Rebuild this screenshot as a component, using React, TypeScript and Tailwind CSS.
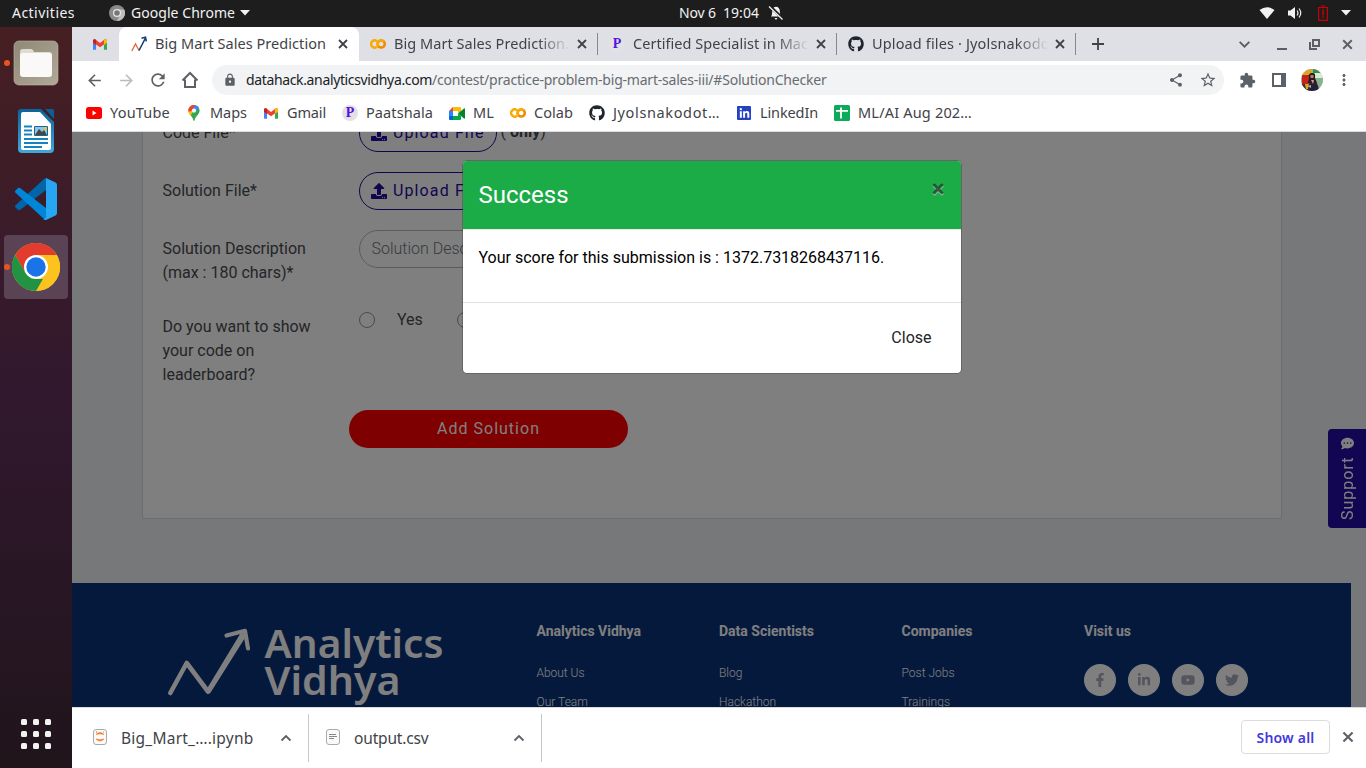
import React, { useLayoutEffect, useRef, useState, ReactNode } from "react";
import { FaGithub, FaFacebookF, FaLinkedinIn, FaYoutube, FaTwitter, FaUpload, FaCommentDots } from "react-icons/fa";
import { MdArrowBack, MdArrowForward, MdRefresh, MdLock, MdShare, MdStarBorder, MdExtension, MdMoreVert } from "react-icons/md";

/** Single line of text whose tracking is adjusted so that it fills a given width. */
function Label({ w, className = "", children }: { w: number; className?: string; children: ReactNode }) {
  const ref = useRef<HTMLSpanElement>(null);
  const [spacing, setSpacing] = useState(0);
  useLayoutEffect(() => {
    const el = ref.current;
    if (!el) return;
    const count = (el.textContent ?? "").length;
    setSpacing((w - el.getBoundingClientRect().width) / count);
  }, [w]);
  return (
    <span className={"block shrink-0 overflow-visible " + className} style={{ width: w }}>
      <span ref={ref} className="inline-block whitespace-pre" style={{ letterSpacing: spacing }}>{children}</span>
    </span>
  );
}

/** Line glyph drawn on a 14-unit grid, used for the small window and tab controls. */
const Glyph = ({ d, className }: { d: string; className: string }) => (
  <svg viewBox="0 0 14 14" className={"shrink-0 " + className} fill="none" stroke="currentColor" strokeWidth="1.800"><path d={d} /></svg>
);
const CROSS = "M3 3l8 8M11 3l-8 8";
const PLUS = "M7 1v12M1 7h12";
const DOWN = "M2.500 4.500 7 9l4.500-4.500";
const UP = "M2.500 9.500 7 5l4.500 4.500";

const GmailIcon = () => (
  <svg viewBox="0 0 16 12" className="h-[11px] w-[14px] shrink-0">
    <path d="M0 2v9a1 1 0 0 0 1 1h2.500V5z" fill="#4285f4" />
    <path d="M16 2v9a1 1 0 0 1-1 1h-2.500V5z" fill="#34a853" />
    <path d="M0 4V1.600C0 .1 1.700-.5 2.900.4L8 4.300 13.100.4C14.300-.5 16 .1 16 1.600L12.500 6 8 9.200 3.500 6z" fill="#ea4335" />
    <path d="M12.500.900 13.100.4C14.300-.5 16 .1 16 1.600V4l-3.500 2.600z" fill="#fbbc04" />
    <path d="M0 4V1.600C0 .1 1.700-.5 2.900.4l.6.5v5.700z" fill="#c5221f" />
  </svg>
);

const ColabIcon = () => (
  <svg viewBox="0 0 16 10" className="h-[10px] w-4 shrink-0" fill="none" strokeWidth="2.500">
    <path d="M7 2.200A3.600 3.600 0 1 0 7 7.800" stroke="#f9ab00" />
    <circle cx="11.200" cy="5" r="3.600" stroke="#f08c00" />
    <path d="M8.600 7.500A3.600 3.600 0 0 1 13.800 2.500" stroke="#f9ab00" />
  </svg>
);

const PIcon = () => (
  <span className="flex size-4 shrink-0 items-center justify-center rounded-full bg-[#e2e2e6] font-['Liberation_Serif',serif] text-[14px] font-bold leading-none text-[#5412e0]">P</span>
);

const ArrowIcon = () => (
  <svg viewBox="0 0 16 16" className="size-4 shrink-0" fill="none" strokeWidth="1.300">
    <path d="M.8 15 4.500 8 8 14.500" stroke="#f0643c" />
    <path d="M8 14.500 14.500 2M10.500 2.300l4-1 .8 4" stroke="#173f7c" strokeWidth="1.600" />
  </svg>
);

const YouTubeIcon = () => (
  <svg viewBox="0 0 16 12" className="h-3 w-4 shrink-0"><rect width="16" height="12" rx="2.500" fill="red" /><path d="M6.500 3.600v4.800L10.500 6z" fill="#fff" /></svg>
);

const MapsIcon = () => (
  <svg viewBox="0 0 12 16" className="h-4 w-3 shrink-0">
    <path d="M6 0a5.600 5.600 0 0 1 5.600 5.600C11.600 9.500 7.500 11 6.600 15.400q-.6.900-1.200 0C4.500 11 .4 9.500.4 5.600A5.600 5.600 0 0 1 6 0z" fill="#34a853" />
    <path d="M1 8.300A5.600 5.600 0 0 1 1.700 2L6 5.600 2.500 10.400z" fill="#fbbc04" />
    <path d="M1.700 2A5.600 5.600 0 0 1 7.700.3L4 6 .5 6.500Q0 4 1.700 2z" fill="#ea4335" />
    <path d="M7.700.3A5.600 5.600 0 0 1 11 3.100L6 7.500 4 5z" fill="#4285f4" />
    <circle cx="6" cy="5.600" r="2.100" fill="#fff" />
  </svg>
);

const MeetIcon = () => (
  <svg viewBox="0 0 16 13" className="h-[13px] w-4 shrink-0">
    <path d="M0 4 4 0v4z" fill="#ea4335" /><path d="M4 0h7a1 1 0 0 1 1 1v4L9 6V4H4z" fill="#fbbc04" />
    <path d="M0 4h4v5H0z" fill="#2684fc" /><path d="M0 9h4v4H1a1 1 0 0 1-1-1z" fill="#0066da" />
    <path d="M4 9h5V6.500l3 2.500v3a1 1 0 0 1-1 1H4z" fill="#00ac47" /><path d="M9 6.500 15 1.500q1-.5 1 .5v9q0 1-1 .5z" fill="#00832d" />
    <path d="M4 4h5v5H4z" fill="#fff" />
  </svg>
);

const LinkedInIcon = () => (
  <span className="flex size-[14px] shrink-0 items-center justify-center rounded-[1px] bg-[#2541c4] text-white"><FaLinkedinIn className="size-[11px]" /></span>
);

const SheetIcon = () => (
  <svg viewBox="0 0 16 16" className="size-4 shrink-0"><rect width="16" height="16" rx="1.500" fill="#0caa5b" /><path d="M2 5.800h12M7 2.500v11" stroke="#fff" strokeWidth="1.800" /></svg>
);

function TopBar() {
  return (
    <header className="flex h-[27px] shrink-0 items-center bg-[#1d1d1d] pb-px pl-3 text-[14px] leading-[26px] text-[#f2f2f2]">
      <Label w={63}>Activities</Label>
      <svg viewBox="0 0 16 16" className="ml-[34px] mr-[6px] size-4 shrink-0">
        <circle cx="8" cy="8" r="8" fill="#8a8a8a" /><path d="M8 4.500h7.200A8 8 0 0 1 8 16l3-6z" fill="#bdbdbd" />
        <circle cx="8" cy="8" r="4" fill="#e8e8e8" /><circle cx="8" cy="8" r="2.800" fill="#777" />
      </svg>
      <Label w={104}>Google Chrome</Label>
      <svg viewBox="0 0 10 6" className="ml-[5px] h-[6px] w-[10px]"><path d="M0 0h10L5 5.500z" fill="#f2f2f2" /></svg>
      <Label w={37} className="ml-[429px]">Nov 6</Label>
      <Label w={36} className="ml-[7px]">19:04</Label>
      <svg viewBox="0 0 16 16" className="ml-[9px] size-4 shrink-0">
        <path d="M3 11.500C4.500 10 4 7 4.300 5.200 4.700 3 6 2 8 1.800c2.400.1 3.600 1.800 3.800 4 .2 2.500 0 4 1.700 5.700zM6.500 13h3l-1.500 2z" fill="#f2f2f2" />
        <path d="m1.500.8 13.500 13" stroke="#1d1d1d" strokeWidth="3" /><path d="m1 1.500 13.500 13" stroke="#f2f2f2" strokeWidth="1.300" />
      </svg>
      <div className="ml-auto flex items-center pr-[15px]">
        <svg viewBox="0 0 16 12" className="h-3 w-4"><path d="M8 12 .5 3Q8-2.500 15.500 3z" fill="#f2f2f2" /></svg>
        <svg viewBox="0 0 16 14" className="ml-3 h-[14px] w-4"><path d="M1 4.500h2.500L8 1v12L3.500 9.500H1z" fill="#f2f2f2" /><path d="M10 4.500q2 2.500 0 5M12 2.500q3.500 4.500 0 9" fill="none" stroke="#f2f2f2" strokeWidth="1.200" /></svg>
        <svg viewBox="0 0 10 16" className="ml-[15px] h-4 w-[10px]"><path d="M.6 2.500h8.800v12.900H.6zM3 1h4" fill="none" stroke="#c80000" strokeWidth="1.200" /><path d="M5 4.500v6M5 11.500v1.500" stroke="#c80000" strokeWidth="1.500" /></svg>
        <svg viewBox="0 0 10 6" className="ml-[13px] h-[6px] w-[10px]"><path d="M0 0h10L5 5.500z" fill="#f2f2f2" /></svg>
      </div>
    </header>
  );
}

function Dock() {
  return (
    <nav className="flex w-[72px] shrink-0 flex-col items-center bg-linear-to-b from-[#461f22] via-[#31182e] via-50% to-[#20141b] pt-1">
      <div className="relative flex size-16 items-center justify-center">
        <i className="absolute left-0 top-[29px] size-[6px] rounded-full bg-[#e95420]" />
        <svg viewBox="0 0 46 46" className="size-[46px]">
          <defs><linearGradient id="fold" x2="1" y2="1"><stop stopColor="#8f8877" /><stop offset="1" stopColor="#b0a998" /></linearGradient></defs>
          <rect x="1" y="1" width="44" height="44" rx="5" fill="url(#fold)" stroke="#c2bba9" strokeOpacity=".6" />
          <path d="M7 12q0-3 3-3h8q2 0 3 3h15q3 0 3 3v10H7z" fill="#dedbd0" /><rect x="7" y="13" width="32" height="24" rx="3" fill="#faf9f8" />
        </svg>
      </div>
      <div className="mt-1 flex size-16 items-center justify-center">
        <svg viewBox="0 0 38 46" className="h-[46px] w-[38px]">
          <defs><linearGradient id="wr" x2="0" y2="1"><stop stopColor="#0d629b" /><stop offset="1" stopColor="#3fa9dc" /></linearGradient></defs>
          <path d="M4 1h20l13 13v27q0 4-4 4H5q-4 0-4-4V4q0-3 3-3z" fill="url(#wr)" />
          <path d="M6 4h17l11 12v24q0 2-2 2H6q-2 0-2-2V6q0-2 2-2z" fill="#fff" /><path d="M28 1h7q2 0 2 2v8z" fill="#0d5f96" />
          <path d="M7 18.500h8M7 22.500h8M7 26.500h8M7 31h24M7 35h24M7 39h18" stroke="#1583bd" strokeWidth="1.800" />
          <path d="M17.500 18.500h13v9h-13z" fill="#8fc5e4" stroke="#1a6794" /><path d="m18 27 4-6 3 3 2-2 3 5z" fill="#454545" /><circle cx="28.500" cy="20.500" r="1.500" fill="#f4c430" />
        </svg>
      </div>
      <div className="mt-1 flex size-16 items-center justify-center">
        <svg viewBox="0 0 42 42" className="size-[42px]">
          <path d="M31 0v12L5 32q-1 .6-2 0l-2.500-2.500q-1-1.200 0-2.200L29 1z" fill="#0065a9" />
          <path d="M31 42V30L5 10q-1-.6-2 0L.5 12.500q-1 1.200 0 2.200L29 41z" fill="#0086d8" />
          <path d="M31 0 40.500 4.500Q42 5.300 42 7v28q0 1.700-1.500 2.500L31 42q-1.500.3-2.500-1l2.500-1z" fill="#27a7f3" />
        </svg>
      </div>
      <div className="relative mt-1 flex size-16 items-center justify-center rounded-[4px] bg-[#5a4355]">
        <i className="absolute left-0 top-[29px] size-[6px] rounded-full bg-[#e95420]" />
        <svg viewBox="0 0 48 48" className="size-12">
          <circle cx="24" cy="24" r="24" fill="#fcc31e" />
          <path d="M3.200 12A24 24 0 0 1 44.800 12H24L13.600 30z" fill="#e33b2e" />
          <path d="M3.200 12 13.600 30 24 36h10.400L24 48A24 24 0 0 1 3.200 12z" fill="#229342" />
          <path d="M24 48 34.400 30V12h10.400A24 24 0 0 1 24 48z" fill="#fcc31e" />
          <circle cx="24" cy="24" r="12" fill="#fff" /><circle cx="24" cy="24" r="9.700" fill="#1a73e8" />
        </svg>
      </div>
      <div className="mb-[19px] mt-auto grid grid-cols-3 gap-[6px]">
        {Array.from({ length: 9 }, (_, i) => <i key={i} className="size-[6px] rounded-[1.500px] bg-[#f2f2ee]" />)}
      </div>
    </nav>
  );
}

function Tab({ icon, text, w }: { icon: ReactNode; text: string; w: number }) {
  return (
    <div className="flex h-full w-[239px] shrink-0 items-center border-r border-[#8d9095] pl-[11px] [border-image:linear-gradient(transparent_7px,#85888d_7px,#85888d_27px,transparent_27px)_1]">
      {icon}
      <div className="ml-2 w-[176px] overflow-hidden [mask-image:linear-gradient(90deg,#000_82%,transparent)]"><Label w={w}>{text}</Label></div>
      <Glyph d={CROSS} className="ml-[5px] size-[14px]" />
    </div>
  );
}

function TabStrip() {
  return (
    <div className="flex h-[34px] shrink-0 items-center bg-[#dee0e5] text-[14.500px] text-[#3f4348]">
      <div className="flex w-[47px] shrink-0 justify-center pl-[9px]"><GmailIcon /></div>
      <div className="flex h-full w-[240px] shrink-0 items-center rounded-t-lg bg-white pl-3">
        <ArrowIcon /><Label w={171} className="ml-2">Big Mart Sales Prediction</Label><Glyph d={CROSS} className="ml-[10px] size-[14px]" />
      </div>
      <Tab icon={<ColabIcon />} text="Big Mart Sales Prediction." w={175} />
      <Tab icon={<PIcon />} text="Certified Specialist in Mach" w={184} />
      <Tab icon={<FaGithub className="size-4 shrink-0 text-[#20252b]" />} text="Upload files · Jyolsnakodot" w={183} />
      <Glyph d={PLUS} className="ml-[15px] size-[14px]" />
      <div className="ml-auto flex items-center pr-[11px] text-[#5b5e63]">
        <Glyph d={DOWN} className="mr-px size-[15px]" />
        <svg viewBox="0 0 10 12" className="ml-[24px] h-3 w-[10px]"><path d="M0 11h10" stroke="currentColor" strokeWidth="2" /></svg>
        <svg viewBox="0 0 11 11" className="ml-[22px] size-[11px]" fill="none" stroke="currentColor" strokeWidth="2"><path d="M4 1h6v6H4zM1 3v7h7" /></svg>
        <Glyph d={CROSS} className="ml-[20px] size-[15px]" />
      </div>
    </div>
  );
}

function Toolbar() {
  return (
    <div className="flex h-[38px] shrink-0 items-center bg-white pl-[13px] text-[#5c6067]">
      <MdArrowBack className="size-[19px]" />
      <MdArrowForward className="ml-[13px] size-[19px] text-[#b9bbbe]" />
      <MdRefresh className="ml-[12px] size-[20px]" />
      <svg viewBox="0 0 18 18" className="ml-[13px] size-[18px]" fill="none" stroke="currentColor" strokeWidth="2"><path d="M4 8.500V16h10V8.500M1.500 9.500 9 2l7.500 7.500" /></svg>
      <div className="ml-[13px] flex h-[30px] w-[1012px] items-center rounded-full bg-[#f1f3f4] pl-[11px]">
        <MdLock className="size-[14px]" />
        <Label w={186} className="-mt-[2px] ml-[9px] text-[14px] text-[#202124]">datahack.analyticsvidhya.com</Label>
        <Label w={394.5} className="-mt-[2px] text-[14px] text-[#686c71]">/contest/practice-problem-big-mart-sales-iii/#SolutionChecker</Label>
        <MdShare className="ml-auto size-4" /><MdStarBorder className="ml-[15px] mr-[7px] size-[18px]" />
      </div>
      <MdExtension className="ml-[15px] size-[17px]" />
      <svg viewBox="0 0 14 14" className="ml-[16px] size-[14px]"><path d="M0 0h14v14H0zM2 2v10h7V2z" fill="currentColor" fillRule="evenodd" /></svg>
      <svg viewBox="0 0 22 22" className="ml-[15px] size-[22px]">
        <defs><clipPath id="av"><circle cx="11" cy="11" r="11" /></clipPath></defs>
        <g clipPath="url(#av)">
          <path d="M0 0h22v22H0z" fill="#8db28b" /><path d="M0 0h11v7H0z" fill="#d9a52c" /><path d="M12 0h10v4H12z" fill="#3d8b3c" /><path d="M14 4h8v5h-8z" fill="#d6ecdd" />
          <path d="M1 6h7v9H1z" fill="#c4241c" /><path d="M8 9q-1-5 3-5t3 5l2 5H7z" fill="#241a1c" /><circle cx="11" cy="7.500" r="1.800" fill="#b97f60" />
          <path d="M7 22q0-9 4-10 6-1 7 10z" fill="#251f3a" /><path d="m10 11 2 4 1-4zM6 17l4-1v3z" fill="#d7a078" /><path d="M0 15h5l3 7H0z" fill="#4a341f" /><path d="M4 15h3v5H5z" fill="#d9a52c" />
        </g>
      </svg>
      <MdMoreVert className="ml-[12px] size-[18px]" />
    </div>
  );
}

function Bookmark({ icon, text, w, className }: { icon: ReactNode; text: string; w: number; className: string }) {
  return <div className={"flex items-center " + className}>{icon}<Label w={w}>{text}</Label></div>;
}

function Bookmarks() {
  return (
    <div className="flex h-[33px] shrink-0 items-center border-b border-[#dadce0] bg-white pb-[4px] pl-[14px] text-[14.500px] text-[#3f4348]">
      <Bookmark className="w-[102px] gap-2" icon={<YouTubeIcon />} text="YouTube" w={60} />
      <Bookmark className="w-[76px] gap-[10px]" icon={<MapsIcon />} text="Maps" w={37} />
      <Bookmark className="w-[78px] gap-[9px]" icon={<GmailIcon />} text="Gmail" w={39} />
      <Bookmark className="w-[107px] gap-2" icon={<PIcon />} text="Paatshala" w={67} />
      <Bookmark className="w-[61px] gap-2" icon={<MeetIcon />} text="ML" w={21} />
      <Bookmark className="w-[79px] gap-2" icon={<ColabIcon />} text="Colab" w={39} />
      <Bookmark className="w-[148px] gap-2" icon={<FaGithub className="size-4 shrink-0 text-[#20252b]" />} text="Jyolsnakodot…" w={107} />
      <Bookmark className="w-[97px] gap-[9px]" icon={<LinkedInIcon />} text="LinkedIn" w={58} />
      <Bookmark className="gap-2" icon={<SheetIcon />} text="ML/AI Aug 202…" w={114} />
    </div>
  );
}

const UploadButton = () => (
  <button className="flex h-[38px] w-[138px] items-center gap-[6px] rounded-full border border-[#240a9c] pl-[11px] text-base text-[#240a9c]">
    <FaUpload className="size-4" /><Label w={91.5}>Upload File</Label>
  </button>
);

const Radio = () => <i className="size-4 rounded-full border border-[#96969e]" />;

const footerColumns = [
  { title: "Analytics Vidhya", tw: 104.5, links: [["About Us", 48], ["Our Team", 51.5]] },
  { title: "Data Scientists", tw: 95, links: [["Blog", 23.5], ["Hackathon", 57]] },
  { title: "Companies", tw: 71, links: [["Post Jobs", 53], ["Trainings", 48.5]] },
] as const;

function Page() {
  return (
    <main className="relative flex h-[575px] shrink-0 flex-col overflow-hidden bg-[#eef1f5] font-[Roboto,sans-serif] text-base leading-6 text-[#494b4e]">
      <section className="-mt-[18px] ml-[70px] flex h-[405px] w-[1140px] shrink-0 flex-col border border-t-0 border-[#d9dbde] bg-white pl-[19.500px]">
        <div className="flex h-[58px]">
          <div className="w-[196.500px] pt-[7px]">Code File*</div><UploadButton />
          <div className="ml-[3.500px] pt-[6px]">( <b>only</b>)</div>
        </div>
        <div className="flex h-[58px]"><div className="w-[196.500px] pt-[7px]">Solution File*</div><UploadButton /></div>
        <div className="flex h-[79px]">
          <div className="w-[196.500px] pt-[7px]">Solution Description<br />(max : 180 chars)*</div>
          <div className="flex h-[38px] w-[280px] items-center rounded-full border border-[#b5b7bb] pl-[11.500px] font-light text-[#6c757d]">Solution Description</div>
        </div>
        <div className="flex h-[101px]">
          <div className="w-[196.500px] pr-9 pt-[6px]">Do you want to show your code on leaderboard?</div>
          <div className="-mt-px flex h-6 items-center"><Radio /><span className="ml-[22px] w-[60px]">Yes</span><Radio /><span className="ml-[22px]">No</span></div>
        </div>
        <button className="ml-[186.500px] flex h-[38px] w-[279px] shrink-0 items-center justify-center rounded-full bg-[#ff0000] text-white"><Label w={103}>Add Solution</Label></button>
      </section>
      <footer className="mt-[64px] flex h-[126px] w-[1279px] shrink-0 bg-[#0a327a] text-white">
        <svg viewBox="0 0 290 90" className="ml-[90px] mt-[38px] h-[90px] w-[290px] shrink-0" fill="none" stroke="#fff" strokeLinejoin="round" strokeLinecap="round">
          <path d="M8.300 72 24.700 42 46 70.500" strokeWidth="4.600" />
          <path d="M44.500 70 79 13 84.500 13 48 71Q46 73.500 44.500 70z" fill="#fff" strokeWidth="1.500" />
          <path d="M64.500 14.500 83 9.800 86 27.500" strokeWidth="4.200" />
          <g stroke="none" fill="#fff" fontFamily="Noto Sans, sans-serif" fontWeight="600" fontSize="39.500">
            <text x="102.500" y="37" textLength="179" lengthAdjust="spacingAndGlyphs">Analytics</text>
            <text x="102.500" y="74" textLength="136" lengthAdjust="spacingAndGlyphs">Vidhya</text>
          </g>
        </svg>
        <div className="ml-[84.500px] flex pt-9">
          {footerColumns.map((c) => (
            <div key={c.title} className="w-[182.500px] shrink-0">
              <Label w={c.tw} className="text-sm font-bold leading-6">{c.title}</Label>
              <div className="mt-[16px] flex flex-col text-xs font-light leading-[29px]">
                {c.links.map(([t, w]) => <Label key={t} w={w}>{t}</Label>)}
              </div>
            </div>
          ))}
          <div>
            <div className="text-sm font-bold leading-6">Visit us</div>
            <div className="mt-[21px] flex gap-3 text-[#a9a9bd]">
              {[FaFacebookF, FaLinkedinIn, FaYoutube, FaTwitter].map((Icon, i) => (
                <span key={i} className="flex size-8 items-center justify-center rounded-full bg-white"><Icon className="size-[14px]" /></span>
              ))}
            </div>
          </div>
        </div>
      </footer>
      <div className="absolute right-0 top-[297px] flex h-[99px] w-[38px] rotate-180 items-center justify-center gap-[6px] rounded-r-[4px] bg-[#240aa4] pr-px text-white [writing-mode:vertical-rl]">
        <span className="text-base tracking-[1px]">Support</span><FaCommentDots className="size-[13px] rotate-180" />
      </div>
      <div className="absolute inset-0 bg-black/50" />
      <div className="absolute left-[390px] top-[28px] flex h-[214px] w-[500px] flex-col overflow-hidden rounded-[5px] border border-black/20 bg-white bg-clip-padding text-black">
        <div className="flex h-[69px] shrink-0 items-start justify-between border-b border-[#e9ecef] bg-[#1bac48] pl-[15.500px] pr-[16.500px] pt-4">
          <h5 className="text-2xl leading-9 text-white">Success</h5>
          <span className="text-2xl font-bold leading-6 text-black/60 [text-shadow:0_1px_0_#ffffff80]">×</span>
        </div>
        <div className="h-[72px] shrink-0 px-[15.500px] pt-4">Your score for this submission is : 1372.7318268437116.</div>
        <div className="flex grow items-center justify-end border-t border-[#dee2e6] pr-[29.500px] text-[#212529]">Close</div>
      </div>
    </main>
  );
}

function Downloads() {
  return (
    <div className="flex grow items-center border-t border-[#dadce0] bg-white text-[15.500px] text-[#3f4348]">
      <div className="flex h-12 w-[237px] items-center border-r border-[#c6c8ca] pl-[21px]">
        <svg viewBox="0 0 14 16" className="-mt-[2px] h-4 w-[14px]"><rect x=".5" y=".5" width="13" height="15" rx="2.500" fill="#fafafa" stroke="#aaa" /><path d="M3 5.500q4-4 8 0-4-1.500-8 0M3 10q4 4 8 0-4 1.500-8 0" fill="#f37726" stroke="#f37726" strokeWidth=".6" /><circle cx="3.500" cy="3" r=".7" fill="#f37726" /><circle cx="10.500" cy="3" r=".6" fill="#f37726" /></svg>
        <Label w={132.5} className="ml-[14px] mt-px">Big_Mart_….ipynb</Label>
        <Glyph d={UP} className="ml-[25px] size-[14px] text-[#5c6067]" />
      </div>
      <div className="flex h-12 w-[233px] items-center border-r border-[#c6c8ca] pl-[17px]">
        <svg viewBox="0 0 14 16" className="-mt-[2px] h-4 w-[14px]"><rect x=".5" y=".5" width="13" height="15" rx="2.500" fill="#fafafa" stroke="#aaa" /><path d="M3 5.500h7M3 7.500h8M3 9.500h5" stroke="#888" /></svg>
        <Label w={74.5} className="ml-[14px] mt-px">output.csv</Label>
        <Glyph d={UP} className="ml-[83px] size-[14px] text-[#5c6067]" />
      </div>
      <button className="-mt-[2px] ml-auto flex h-[34px] w-[89px] items-center justify-center rounded-[4px] border border-[#dadce0] text-[14px] font-semibold text-[#4338e0]"><Label w={58}>Show all</Label></button>
      <Glyph d={CROSS} className="-mt-[2px] ml-[10px] mr-[10px] size-4 text-[#5c6067]" />
    </div>
  );
}

export default function App() {
  return (
    <div className="flex h-[768px] w-[1366px] flex-col overflow-hidden font-['Noto_Sans',sans-serif]">
      <TopBar />
      <div className="flex min-h-0 grow">
        <Dock />
        <div className="flex min-w-0 grow flex-col">
          <TabStrip /><Toolbar /><Bookmarks /><Page /><Downloads />
        </div>
      </div>
    </div>
  );
}
